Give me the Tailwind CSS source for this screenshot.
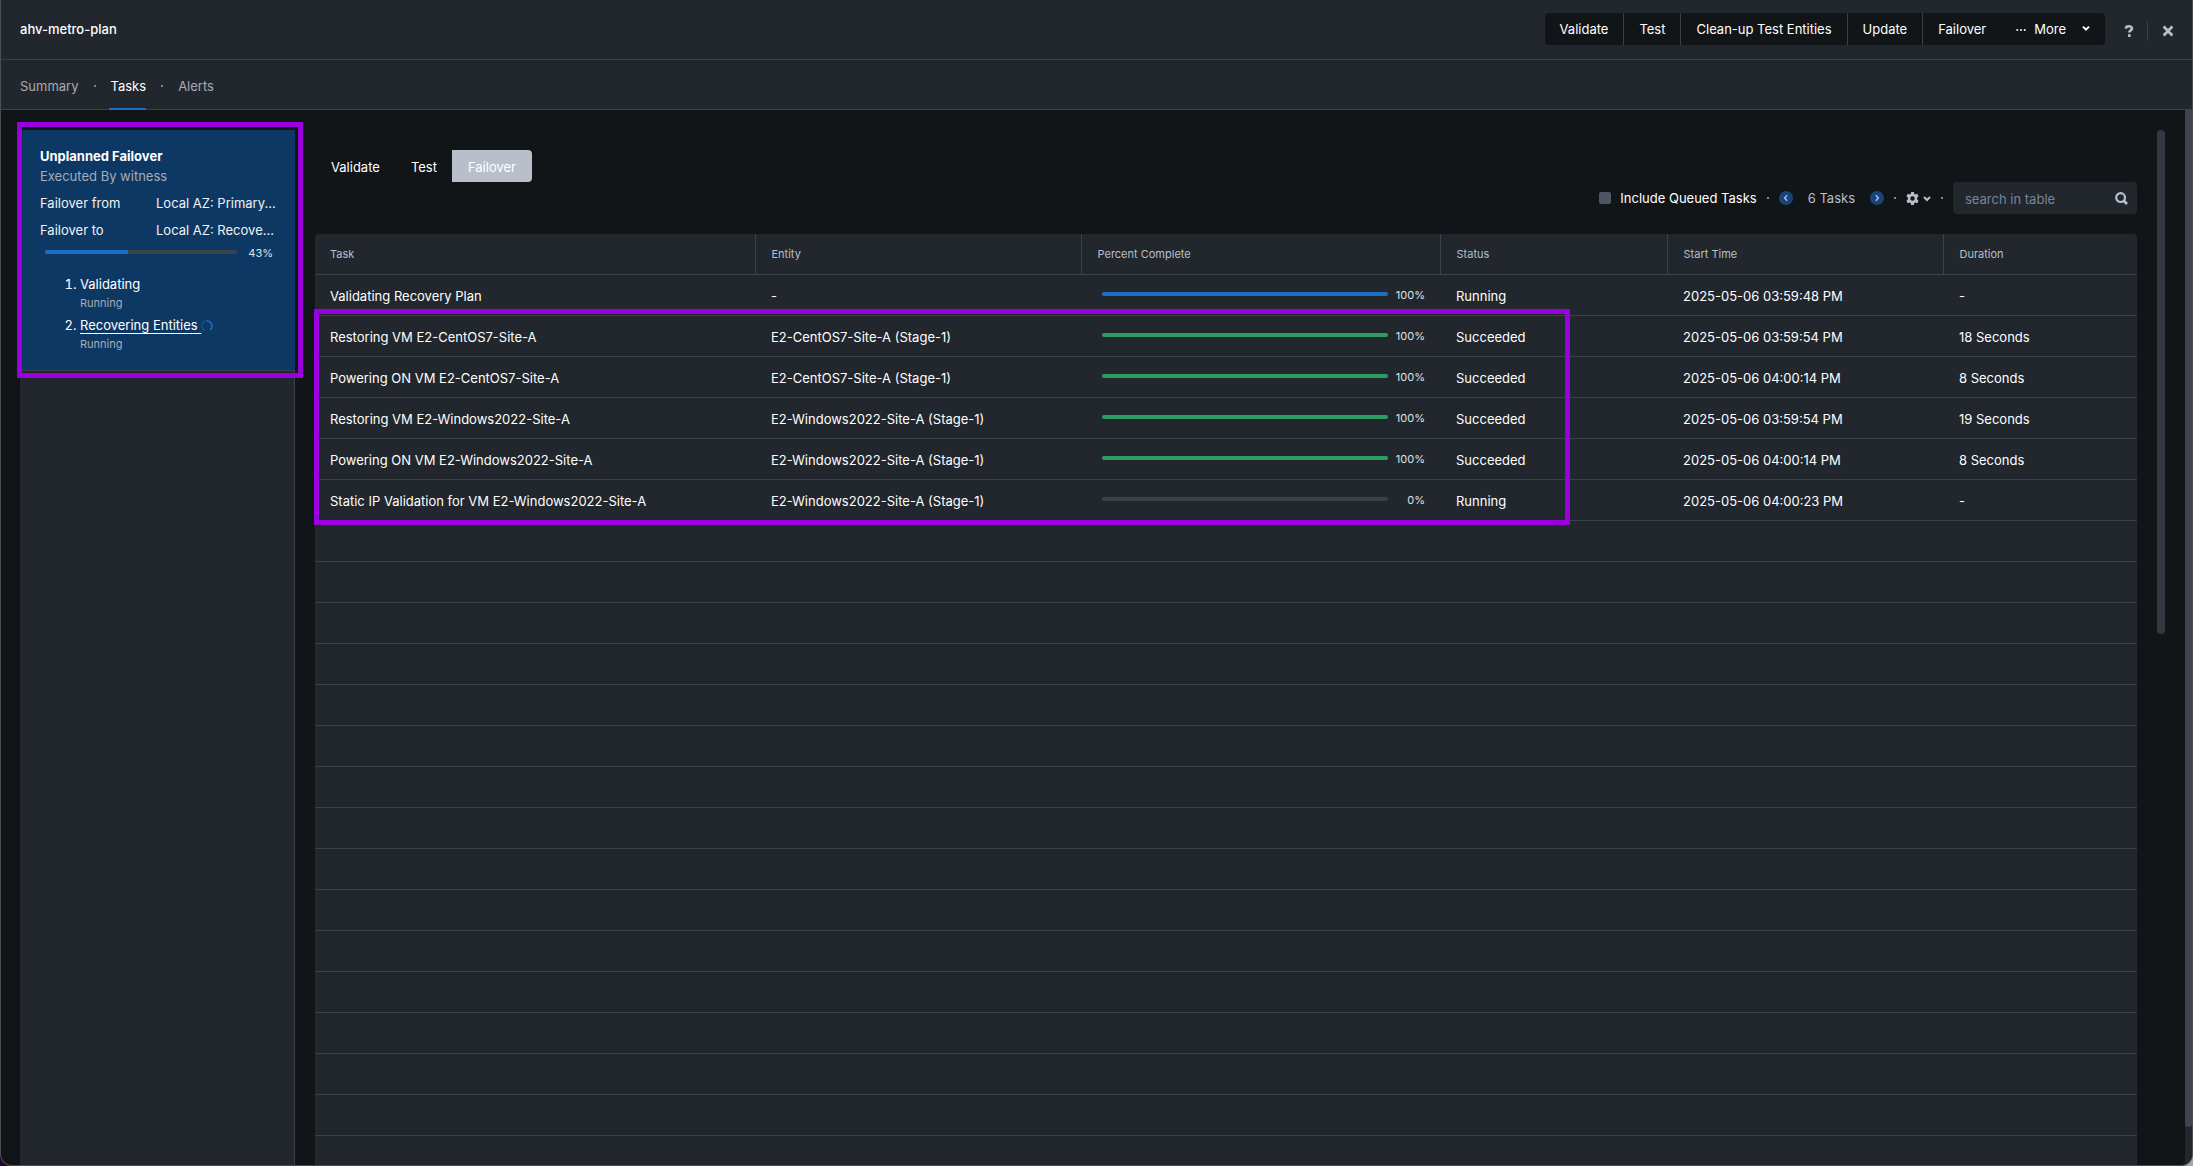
<!DOCTYPE html>
<html lang="en">
<head>
    <meta charset="UTF-8">
    <meta name="viewport" content="width=device-width, initial-scale=1.0">
    <title>ahv-metro-plan</title>
    <script src="https://cdn.jsdelivr.net/npm/@tailwindcss/browser@4"></script>
</head>
<body class="bg-linear-to-r from-[#1d0b35] to-[#a5a5a5] font-['Inter',sans-serif] text-[13px] leading-5 text-white">

    <div class="flex h-screen flex-col overflow-hidden rounded-b-xl border-x border-b border-[#4a4e55] bg-[#121518]">

        <!-- Title bar -->
        <header class="flex h-[60px] shrink-0 items-center border-b border-[#39414b] bg-[#22272e] pr-[18px] pb-[1px] pl-[19px]">
            <h1 class="flex-1 font-medium">ahv-metro-plan</h1>
            <div class="flex h-8 divide-x divide-[#39414b] overflow-hidden rounded bg-[#121518]">
                <button type="button" class="px-[15px]">Validate</button>
                <button type="button" class="px-[15px]">Test</button>
                <button type="button" class="px-[15px]">Clean-up Test Entities</button>
                <button type="button" class="px-[15px]">Update</button>
                <div class="flex">
                    <button type="button" class="px-[15px]">Failover</button>
                    <button type="button" class="flex items-center px-[15px]">
                        <svg class="mr-2 h-2 w-[10px]" viewBox="0 0 10 8" fill="currentColor"><circle cx="1.3" cy="5" r="1" /><circle cx="5" cy="5" r="1" /><circle cx="8.7" cy="5" r="1" /></svg>
                        More
                        <svg class="ml-4 h-2 w-2" viewBox="0 0 8 8" fill="none" stroke="currentColor" stroke-width="2"><path d="M1 1.6l3 3 3-3" /></svg>
                    </button>
                </div>
            </div>
            <button type="button" aria-label="Help" class="ml-[18px] pt-1 text-[#b8bfca]">
                <svg class="h-3 w-3" viewBox="0 0 12 12" fill="none" stroke="currentColor" stroke-width="2.6"><path d="M2.8 3.6C3 1.9 4.2 1.3 6 1.3s3 .9 3 2.3c0 1.800-2.700 1.700-2.700 3.900" /><path d="M5 9.2h2.700v2.700H5z" fill="currentColor" stroke="none" /></svg>
            </button>
            <span class="mx-3 mt-[3px] h-5 w-px bg-[#39414b]"></span>
            <button type="button" aria-label="Close" class="pt-1 pl-[2px] text-[#b8bfca]">
                <svg class="h-3 w-3" viewBox="0 0 12 12" fill="none" stroke="currentColor" stroke-width="2.8"><path d="M1.6 1.6l8.8 8.8M10.4 1.6l-8.8 8.8" /></svg>
            </button>
        </header>

        <!-- Page tabs -->
        <nav class="flex h-[50px] shrink-0 items-center border-b border-[#39414b] bg-[#22272e] pt-[2px] pl-[19px] text-[#a5acb8]">
            <a href="#">Summary</a>
            <span class="mr-[13px] ml-[15px] size-[2px] bg-[#7e8794]"></span>
            <a href="#" class="-mb-px flex h-12 items-center border-b-2 border-[#1b6dc6] pt-[2px] pl-[2px] text-white">Tasks</a>
            <span class="mx-[15px] size-[2px] bg-[#7e8794]"></span>
            <a href="#">Alerts</a>
        </nav>

        <div class="flex min-h-0 flex-1">
            <main class="flex min-w-0 flex-1 gap-5 overflow-hidden px-5 pt-5 pl-[19px]">

                <!-- Executions list -->
                <aside class="w-[275px] shrink-0 border-r border-[#39414b] bg-[#22272e]">
                    <section class="relative -mr-px h-[241px] border-b border-[#39414b] bg-[#0d3863] px-5 pt-4">
                        <h2 class="font-bold">Unplanned Failover</h2>
                        <p class="text-[#a5acb8]">Executed By witness</p>
                        <dl class="mt-[7px] grid grid-cols-[116px_1fr] gap-y-[7px] text-[#f0f2f5]">
                            <dt>Failover from</dt>
                            <dd class="-mr-1 truncate">Local AZ: Primary...</dd>
                            <dt>Failover to</dt>
                            <dd class="-mr-1 truncate">Local AZ: Recove...</dd>
                        </dl>
                        <div class="mt-[3px] flex items-center pr-[2px] pl-[5px] text-[11px] text-[#dfe3e8]">
                            <div class="mb-[2px] h-1 w-[192px] rounded-full bg-[#3a424c]">
                                <div class="h-1 rounded-l-full bg-[#1b6dc6]" style="width: 43%"></div>
                            </div>
                            <span class="flex-1 text-right">43%</span>
                        </div>
                        <ol class="mt-[11px] list-decimal space-y-[3px] pl-10">
                            <li>
                                Validating
                                <p class="text-[11px] leading-[18px] text-[#a5acb8]">Running</p>
                            </li>
                            <li>
                                <a href="#" class="whitespace-pre underline underline-offset-3">Recovering Entities </a><svg class="inline size-3" viewBox="0 0 12 12" fill="none" stroke="#1b6dc6" stroke-width="1.5"><path d="M4 10.6A5 5 0 0 1 6 1" opacity=".45" /><path d="M6 1a5 5 0 0 1 3 9" /></svg>
                                <p class="text-[11px] leading-[18px] text-[#a5acb8]">Running</p>
                            </li>
                        </ol>
                        <div class="pointer-events-none absolute -top-2 -left-[3px] h-64 w-[286px] border-5 border-[#9900e0]"></div>
                    </section>
                </aside>

                <!-- Tasks of the selected execution -->
                <section class="min-w-0 flex-1">
                    <div class="mt-5 flex h-8">
                        <button type="button" class="px-4 pt-[2px]">Validate</button>
                        <button type="button" class="px-[15px] pt-[2px]">Test</button>
                        <button type="button" class="rounded-r bg-[#b8bfca] px-4 pt-[2px]">Failover</button>
                    </div>

                    <div class="flex h-8 items-center justify-end text-[#b8bfca]">
                        <input type="checkbox" id="queued" class="size-3 appearance-none rounded-[2px] bg-[#4d5664]">
                        <label for="queued" class="ml-[9px] text-white">Include Queued Tasks</label>
                        <span class="mx-[10px] size-[2px] bg-[#7e8794]"></span>
                        <button type="button" aria-label="Previous page" class="flex size-[14px] items-center justify-center rounded-full bg-[#17457b]">
                            <svg class="size-2" viewBox="0 0 8 8" fill="none" stroke="currentColor" stroke-width="1.4"><path d="M5.2 1.2L2.6 4l2.6 2.8" /></svg>
                        </button>
                        <span class="mx-[15px]">6 Tasks</span>
                        <button type="button" aria-label="Next page" class="flex size-[14px] items-center justify-center rounded-full bg-[#17457b]">
                            <svg class="size-2" viewBox="0 0 8 8" fill="none" stroke="currentColor" stroke-width="1.4"><path d="M2.8 1.2L5.4 4 2.8 6.8" /></svg>
                        </button>
                        <span class="mx-[10px] size-[2px] bg-[#7e8794]"></span>
                        <button type="button" aria-label="Table settings" class="flex items-center gap-1">
                            <svg class="size-[13px]" viewBox="0 0 14 14" fill="currentColor"><path fill-rule="evenodd" d="M5.6 0h2.8l.4 2 1.3.7 2-.7 1.4 2.5-1.500 1.400v2.200l1.500 1.400-1.400 2.500-2-.7-1.300.7-.4 2H5.600l-.4-2-1.300-.7-2 .7L.5 9.500 2 8.100V5.900L.5 4.500 1.900 2l2 .7L5.200 2zM7 4.600a2.400 2.400 0 1 0 0 4.800 2.400 2.400 0 0 0 0-4.800z" /></svg>
                            <svg class="mt-[2px] size-2" viewBox="0 0 8 8" fill="none" stroke="currentColor" stroke-width="2"><path d="M1 2l3 3 3-3" /></svg>
                        </button>
                        <span class="mx-[10px] size-[2px] bg-[#7e8794]"></span>
                        <div class="flex h-8 w-[184px] items-center rounded bg-[#22272e] pr-[9px] pl-3">
                            <input type="text" aria-label="search in table" placeholder="search in table" class="mt-[2px] min-w-0 flex-1 outline-none placeholder:text-[#76859a]">
                            <svg class="size-[13px]" viewBox="0 0 13 13" fill="none" stroke="currentColor" stroke-width="2.2"><circle cx="5.600" cy="5.600" r="4.400" /><path d="M8.600 8.600l3.400 3.400" stroke-width="2.800" /></svg>
                        </div>
                    </div>

                    <div class="relative mt-5">
                        <table class="w-full table-fixed overflow-hidden rounded-t bg-[#22272e] text-left">
                            <colgroup>
                                <col>
                                <col class="w-[326px]">
                                <col class="w-[359px]">
                                <col class="w-[227px]">
                                <col class="w-[276px]">
                                <col class="w-[194px]">
                            </colgroup>
                            <thead class="text-[11px] text-[#b8bfca]">
                                <tr class="h-10 border-b border-[#39414b]">
                                    <th class="border-r border-[#39414b] pl-[15px] font-normal">Task</th>
                                    <th class="border-r border-[#39414b] pl-4 font-normal">Entity</th>
                                    <th class="border-r border-[#39414b] pl-4 font-normal">Percent Complete</th>
                                    <th class="border-r border-[#39414b] pl-4 font-normal">Status</th>
                                    <th class="border-r border-[#39414b] pl-4 font-normal">Start Time</th>
                                    <th class="pl-4 font-normal">Duration</th>
                                </tr>
                            </thead>
                            <tbody id="taskRows"></tbody>
                        </table>
                        <div class="pointer-events-none absolute top-[75px] -left-px h-[216px] w-[1256px] border-5 border-[#9900e0]"></div>
                    </div>
                </section>

                <div class="h-[504px] w-2 shrink-0 rounded-full bg-[#333940]"></div>
            </main>

            <!-- Page scrollbar -->
            <div class="w-[7px] shrink-0 bg-[#22272e] pb-[38px]">
                <div class="h-full rounded-b-full bg-[#3f4550]"></div>
            </div>
        </div>
    </div>

    <script>
        const TOTAL_ROWS = 22;

        const tasks = [
            { name: 'Validating Recovery Plan', entity: '-', percent: 100, status: 'Running', start: '2025-05-06 03:59:48 PM', duration: '-' },
            { name: 'Restoring VM E2-CentOS7-Site-A', entity: 'E2-CentOS7-Site-A (Stage-1)', percent: 100, status: 'Succeeded', start: '2025-05-06 03:59:54 PM', duration: '18 Seconds' },
            { name: 'Powering ON VM E2-CentOS7-Site-A', entity: 'E2-CentOS7-Site-A (Stage-1)', percent: 100, status: 'Succeeded', start: '2025-05-06 04:00:14 PM', duration: '8 Seconds' },
            { name: 'Restoring VM E2-Windows2022-Site-A', entity: 'E2-Windows2022-Site-A (Stage-1)', percent: 100, status: 'Succeeded', start: '2025-05-06 03:59:54 PM', duration: '19 Seconds' },
            { name: 'Powering ON VM E2-Windows2022-Site-A', entity: 'E2-Windows2022-Site-A (Stage-1)', percent: 100, status: 'Succeeded', start: '2025-05-06 04:00:14 PM', duration: '8 Seconds' },
            { name: 'Static IP Validation for VM E2-Windows2022-Site-A', entity: 'E2-Windows2022-Site-A (Stage-1)', percent: 0, status: 'Running', start: '2025-05-06 04:00:23 PM', duration: '-' }
        ];

        const taskRows = document.getElementById('taskRows');
        let html = '';

        for (let i = 0; i < TOTAL_ROWS; i++) {
            const task = tasks[i];

            // Rows without a task keep the grid lines going down the page
            if (!task) {
                html += '<tr class="h-[41px] border-b border-[#39414b]"><td colspan="6"></td></tr>';
                continue;
            }

            const barColor = task.status === 'Succeeded' ? 'bg-[#2a9d61]' : 'bg-[#1b6dc6]';
            html += `
                <tr class="h-[41px] border-b border-[#39414b]">
                    <td class="pt-[2px] pl-[15px]">${task.name}</td>
                    <td class="pt-[2px] pl-4">${task.entity}</td>
                    <td class="pr-[15px] pl-[21px]">
                        <div class="flex items-center">
                            <div class="mb-[2px] h-1 flex-1 rounded-full bg-[#39414b]">
                                <div class="h-1 rounded-full ${barColor}" style="width: ${task.percent}%"></div>
                            </div>
                            <span class="w-[37px] text-right text-[11px] text-[#dfe3e8]">${task.percent}%</span>
                        </div>
                    </td>
                    <td class="pt-[2px] pl-4">${task.status}</td>
                    <td class="pt-[2px] pl-4">${task.start}</td>
                    <td class="pt-[2px] pl-4">${task.duration}</td>
                </tr>
            `;
        }

        taskRows.innerHTML = html;
    </script>
</body>
</html>
